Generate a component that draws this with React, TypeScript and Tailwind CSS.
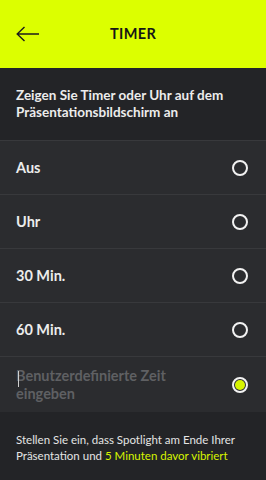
const options = ['Aus', 'Uhr', '30 Min.', '60 Min.'];

function Radio({ checked }: { checked?: boolean }) {
  return (
    <div className="w-[16px] h-[16px] rounded-full border-2 border-[#f2f2f2] flex items-center justify-center shrink-0">
      {checked && <div className="w-[10px] h-[10px] rounded-full bg-[#d7f400]" />}
    </div>
  );
}

export default function App() {
  return (
    <div
      className="w-[266px] h-[480px] bg-[#232427] flex flex-col overflow-hidden"
      style={{ fontFamily: 'Lato, "Liberation Sans", sans-serif' }}
    >
      <div className="h-[68px] bg-[#dcff00] flex items-center px-4 relative">
        <svg width="23" height="16" viewBox="0 0 23 16" fill="none" stroke="#1c1c1c" strokeWidth="1.4">
          <path d="M1 8H23M8.5 1L1.2 8L8.5 15" />
        </svg>
        <div className="absolute inset-0 flex items-center justify-center text-[14.5px] font-bold text-[#161616] tracking-wide">
          TIMER
        </div>
      </div>

      <div className="h-[72px] px-4 flex items-center">
        <p className="text-[13.5px] font-bold leading-[17px] text-[#ececec]">
          Zeigen Sie Timer oder Uhr auf dem Präsentationsbildschirm an
        </p>
      </div>

      <div className="bg-[#2b2c2f] border-t border-[#38393c]">
        {options.map((o) => (
          <div
            key={o}
            className="h-[54px] px-4 pr-[18px] flex items-center justify-between border-b border-[#38393c]"
          >
            <span className="text-[14.5px] font-bold text-[#ececec]">{o}</span>
            <Radio />
          </div>
        ))}
        <div className="h-[55px] px-4 pr-[18px] flex items-center justify-between">
          <div className="relative">
            <span className="block w-[190px] text-[14.5px] font-bold leading-[18px] text-[#5f6063]">
              Benutzerdefinierte Zeit eingeben
            </span>
            <div className="absolute left-[2px] top-[4px] w-px h-[16px] bg-[#d0d0d0]" />
          </div>
          <Radio checked />
        </div>
      </div>

      <div className="px-4 pt-[20px]">
        <p className="text-[11.5px] leading-[16px] text-[#e4e4e4]">
          Stellen Sie ein, dass Spotlight am Ende Ihrer Präsentation und{' '}
          <span className="text-[#d7f400]">5 Minuten davor vibriert</span>
        </p>
      </div>
    </div>
  );
}
